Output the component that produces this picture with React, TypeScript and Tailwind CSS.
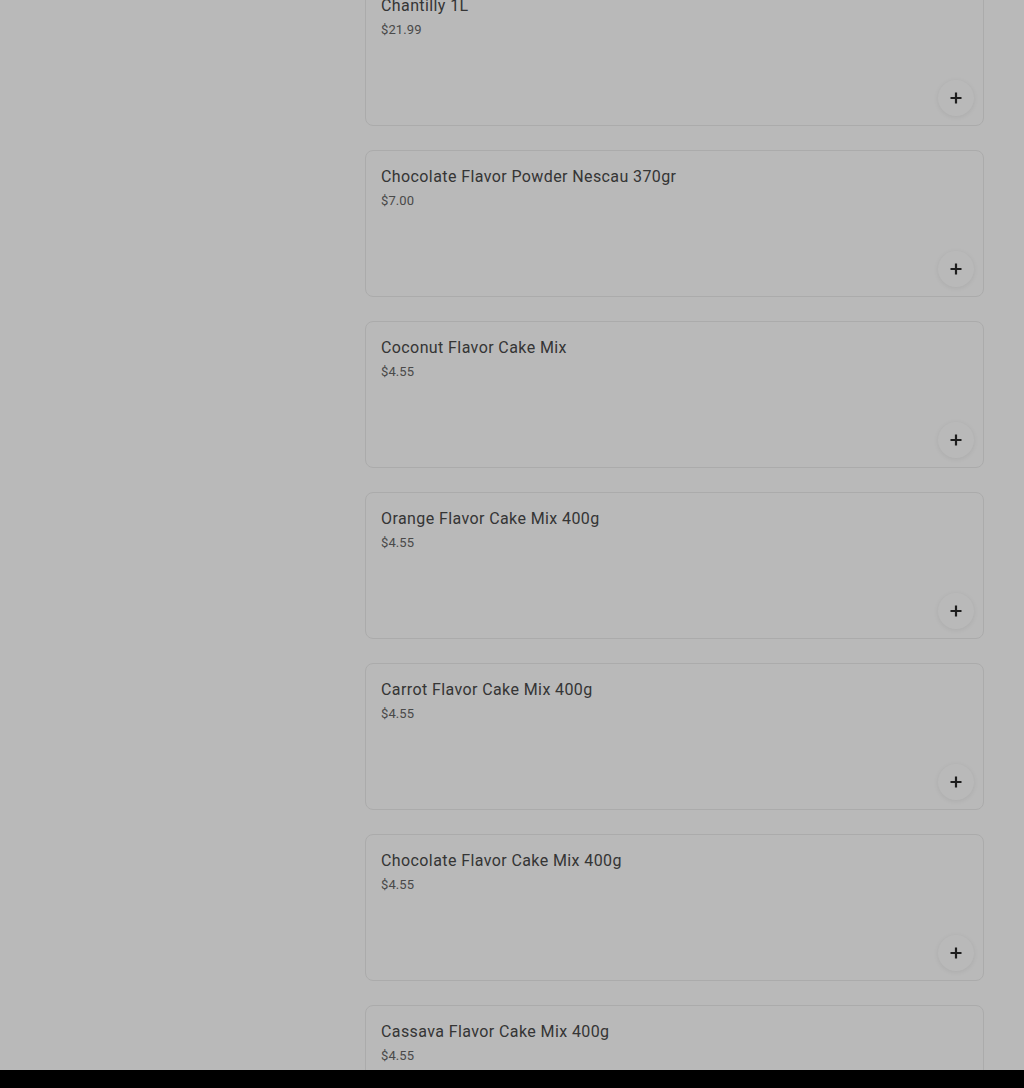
import React from "react";

const products = [
  { name: "Chantilly 1L", price: "$21.99" },
  { name: "Chocolate Flavor Powder Nescau 370gr", price: "$7.00" },
  { name: "Coconut Flavor Cake Mix", price: "$4.55" },
  { name: "Orange Flavor Cake Mix 400g", price: "$4.55" },
  { name: "Carrot Flavor Cake Mix 400g", price: "$4.55" },
  { name: "Chocolate Flavor Cake Mix 400g", price: "$4.55" },
  { name: "Cassava Flavor Cake Mix 400g", price: "$4.55" },
];

function PlusIcon() {
  return (
    <svg width="12" height="12" viewBox="0 0 12 12" fill="none">
      <path d="M6 0.5v11M0.5 6h11" stroke="#2a2a2a" strokeWidth="2.2" />
    </svg>
  );
}

function Card({ name, price }: { name: string; price: string }) {
  return (
    <div className="flex h-[147px] shrink-0 flex-col rounded-lg border border-[#ececec] bg-white pb-[9px] pl-[15px] pr-[9px] pt-[14px]">
      <div className="text-[16px] leading-6 tracking-[0.4px] text-[#4a4a4a]">{name}</div>
      <div className="mt-[2px] text-[13px] leading-5 tracking-[0.1px] text-[#666]">{price}</div>
      <div className="mt-auto flex justify-end">
        <button className="flex h-9 w-9 items-center justify-center rounded-full bg-white shadow-[0_1px_5px_rgba(0,0,0,0.08)]">
          <PlusIcon />
        </button>
      </div>
    </div>
  );
}

export default function App() {
  return (
    <div className="flex h-[1088px] flex-col overflow-hidden bg-black" style={{ fontFamily: "Roboto, 'Noto Sans', sans-serif" }}>
      <div className="relative h-[1070px] shrink-0 overflow-hidden bg-white">
        <div className="flex">
          <div className="w-[365px] shrink-0" />
          <div className="mt-[-21px] flex w-[619px] flex-col gap-6">
            {products.map((p, i) => (
              <Card key={i} name={p.name} price={p.price} />
            ))}
          </div>
        </div>
        <div className="absolute inset-0 bg-black/[0.275]" />
      </div>
      <div className="h-[18px] shrink-0 bg-black" />
    </div>
  );
}
